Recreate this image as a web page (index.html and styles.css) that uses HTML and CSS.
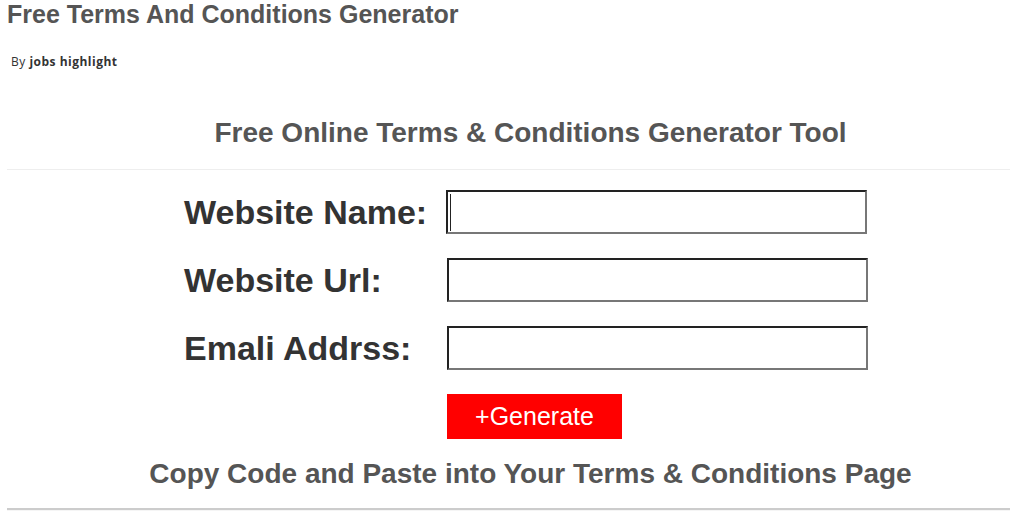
FILE: index.html
```html
<!DOCTYPE html>
<html>
<head>
<meta charset="utf-8">
<link rel="stylesheet" href="styles.css">
</head>
<body>
<header class="post-head">
  <h1 class="post-title">Free Terms And Conditions Generator</h1>
  <div class="byline">By <b>jobs highlight</b></div>
</header>
<main class="content">
  <h2 class="tool-title">Free Online Terms &amp; Conditions Generator Tool</h2>
  <hr class="sep">
  <form class="form">
    <label class="lbl">Website Name:</label>
    <div class="field"><input class="inp focused" type="text"><span class="caret"></span></div>
    <label class="lbl">Website Url:</label>
    <div class="field"><input class="inp" type="text"></div>
    <label class="lbl">Emali Addrss:</label>
    <div class="field"><input class="inp" type="text"></div>
    <div></div>
    <div class="field btn-field"><button type="button" class="btn">+Generate</button></div>
  </form>
  <h2 class="copy-title">Copy Code and Paste into Your Terms &amp; Conditions Page</h2>
  <div class="code-box"></div>
</main>
</body>
</html>
```

FILE: styles.css
```css
html, body { margin: 0; padding: 0; background: #fff; }
body { font-family: "Liberation Sans", Arial, sans-serif; overflow: hidden; height: 511px; width: 1010px; }
.post-head { padding: 0 0 0 7px; }
.post-title { margin: 0; font-size: 25px; font-weight: bold; color: #555; line-height: 28px; }
.byline { margin: 26px 0 0 4px; font-family: "Open Sans", sans-serif; font-size: 12px; letter-spacing: 0.5px; color: #333; line-height: 16px; }
.byline b { font-weight: 700; }
.content { margin-left: 7px; width: 1047px; }
.tool-title { margin: 46px 0 0; text-align: center; font-size: 28px; color: #555; line-height: 34px; font-weight: bold; }
.sep { border: 0; border-top: 1px solid #eee; margin: 19px 0 0; }
.form { display: grid; grid-template-columns: 263px 422px; row-gap: 24px; margin: 20px 0 0 177px; align-items: center; }
.lbl { font-size: 34px; font-weight: bold; color: #333; line-height: 44px; white-space: nowrap; }
.field { position: relative; height: 44px; }
.btn-field { height: 45px; }
.inp { box-sizing: border-box; width: 421px; height: 44px; margin: 0; border: 2px solid; border-color: #222 #777 #777 #222; background: #fff; padding: 0 4px; outline: none; }
.focused { margin-left: -1px; }
.caret { position: absolute; left: 3px; top: 4px; width: 1px; height: 37px; background: #222; }
.btn { border: 0; background: #f00; color: #fff; font-family: "Liberation Sans", Arial, sans-serif; font-size: 25px; width: 175px; height: 45px; padding: 0; margin: 0; display: block; }
.copy-title { margin: 18px 0 0; text-align: center; font-size: 28px; font-weight: bold; color: #555; line-height: 34px; }
.code-box { margin-top: 17px; border-top: 2px solid #ccc; background: #f5f5f5; height: 20px; }
```
